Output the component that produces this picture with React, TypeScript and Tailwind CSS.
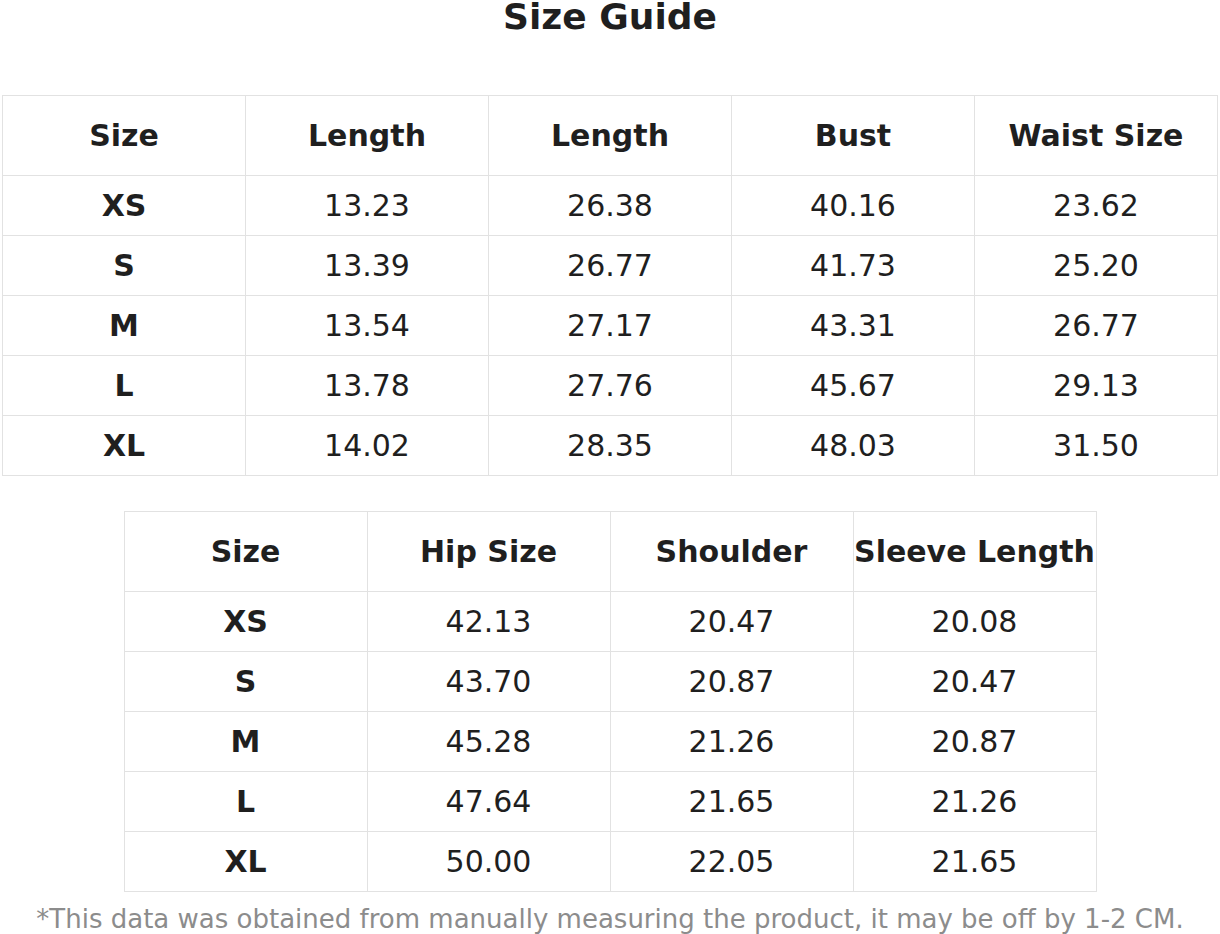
const table1 = {
  head: ["Size", "Length", "Length", "Bust", "Waist Size"],
  rows: [
    ["XS", "13.23", "26.38", "40.16", "23.62"],
    ["S", "13.39", "26.77", "41.73", "25.20"],
    ["M", "13.54", "27.17", "43.31", "26.77"],
    ["L", "13.78", "27.76", "45.67", "29.13"],
    ["XL", "14.02", "28.35", "48.03", "31.50"],
  ],
};

const table2 = {
  head: ["Size", "Hip Size", "Shoulder", "Sleeve Length"],
  rows: [
    ["XS", "42.13", "20.47", "20.08"],
    ["S", "43.70", "20.87", "20.47"],
    ["M", "45.28", "21.26", "20.87"],
    ["L", "47.64", "21.65", "21.26"],
    ["XL", "50.00", "22.05", "21.65"],
  ],
};

function SizeTable({ data }: { data: { head: string[]; rows: string[][] } }) {
  return (
    <table className="mx-auto table-fixed border-collapse border border-[#e2e2e2]">
      <thead>
        <tr className="h-[80px]">
          {data.head.map((h, i) => (
            <th
              key={i}
              className="w-[243px] border border-[#e2e2e2] p-0 text-center text-[30px] font-bold whitespace-nowrap"
            >
              {h}
            </th>
          ))}
        </tr>
      </thead>
      <tbody>
        {data.rows.map((row) => (
          <tr key={row[0]} className="h-[60px]">
            {row.map((cell, i) => (
              <td
                key={i}
                className={
                  "w-[243px] border border-[#e2e2e2] p-0 text-center text-[30px] " +
                  (i === 0 ? "font-bold" : "font-normal")
                }
              >
                {cell}
              </td>
            ))}
          </tr>
        ))}
      </tbody>
    </table>
  );
}

export default function App() {
  return (
    <div className="w-[1220px] h-[934px] bg-white text-[#1f1f1f] font-['DejaVu_Sans',sans-serif] overflow-hidden">
      <h1 className="pt-[2px] text-center text-[36px] font-bold leading-[30px]">Size Guide</h1>
      <div className="mt-[63px]">
        <SizeTable data={table1} />
      </div>
      <div className="mt-[35px]">
        <SizeTable data={table2} />
      </div>
      <p className="mt-[14px] text-center text-[26px] leading-none text-[#8c8c8c]">
        *This data was obtained from manually measuring the product, it may be off by 1-2 CM.
      </p>
    </div>
  );
}
